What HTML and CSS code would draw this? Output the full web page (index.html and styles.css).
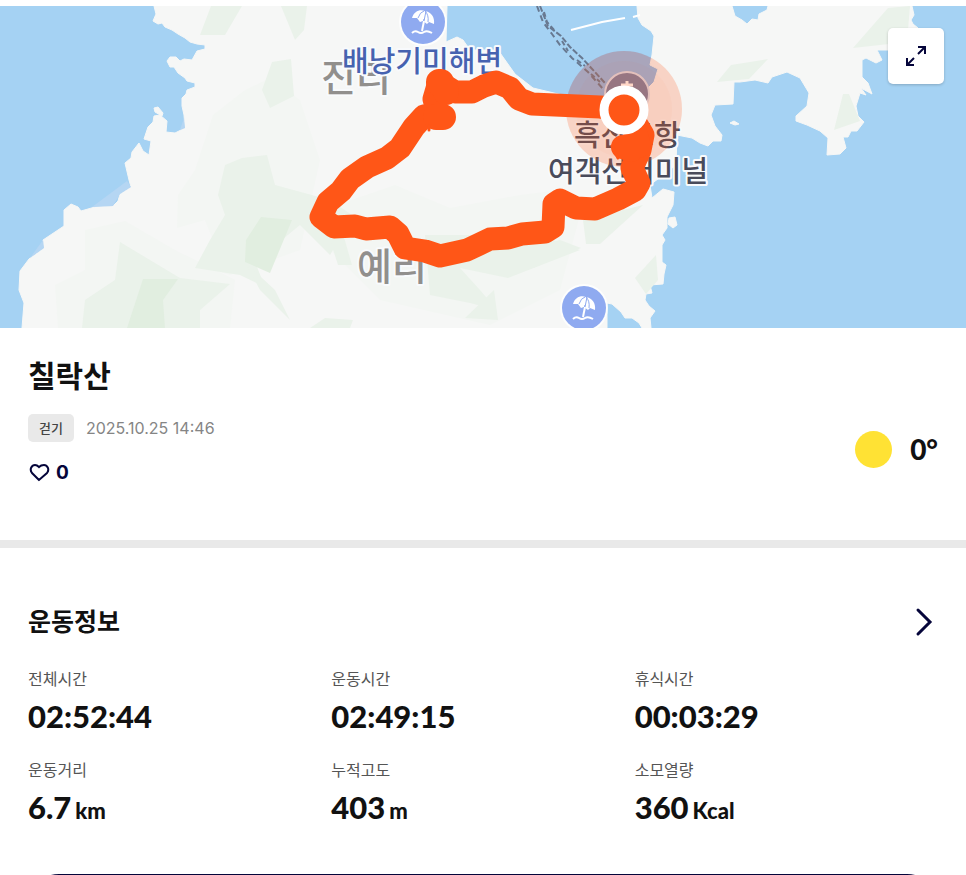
FILE: index.html
```html
<!DOCTYPE html>
<html lang="ko">
<head>
  <meta charset="UTF-8"/>
  <meta name="viewport" content="width=device-width, initial-scale=1.0"/>
  <title>칠락산</title>
  <link rel="stylesheet" href="styles.css">
</head>
<body>
  <div class="page">
    <div class="map">
      <svg class="map-canvas" viewBox="0 6 966 322" preserveAspectRatio="xMidYMid slice">
        <defs>
          <g id="beach">
            <circle r="24" fill="#fff" opacity=".8"/>
            <circle r="22" fill="#8faaf0"/>
            <path d="M-11 -4C-9 -11 -3 -13 2 -11C8 -10 12 -5 11 2L6 0L4 2L0 -1L-3 0L-6 -4Z" fill="#fff"/>
            <path d="M1 -12L3 -11L-1 9L-3 9L1 -3M-5 -4Q-3 -10 1 -11M5 0Q6 -7 2 -11" fill="none" stroke="#8faaf0"/>
            <path d="M1 -1L-1 9" stroke="#fff" stroke-width="2"/>
            <path d="M-11 11Q-8 8 -5 10T1 10T9 11" fill="none" stroke="#fff" stroke-width="2"/>
          </g>
        </defs>
        <rect y="6" width="966" height="322" fill="#a5d2f3"/>
        <circle cx="624" cy="109" r="58" fill="#6f96dc" opacity=".36"/>

        <!-- island -->
        <path class="land" d="M154 6L156 14L153 21L158 24L162 23L165 27L172 30L178 34L185 38L190 42L197 44L205 45L205 49L197 51L192 60L184 59L180 61L176 57L170 57L167 61L170 67L174 67L178 73L185 78L187 81L195 83L195 87L187 90L186 94L182 98L182 106L184 115L185 128L175 133L166 132L167 121L160 115L154 116L153 122L148 127L144 139L151 141L149 155L143 151L139 143L132 152L131 158L125 163L129 180L131 187L120 194L118 201L113 206L95 207L81 211L78 207L71 204L64 210L64 226L43 240L44 248L29 259L20 271L19 290L24 303L22 328L607 328L607 303L612 304L621 312L625 318L632 318L639 323L642 328L651 328L650 318L655 311L649 306L645 300L646 294L652 293L650 285L663 284L664 274L666 265L662 262L662 245L665 240L662 235L667 228L667 217L673 205L674 192L663 189L652 198L650 185L676 165L677 135L692 138L700 143L708 146L713 141L721 141L722 135L715 126L711 115L715 105L733 104L734 82L740 82L755 80L768 83L772 77L787 72L800 78L809 93L807 106L796 116L796 121L807 125L820 131L828 138L827 155L840 154L846 148L843 137L848 137L851 131L857 131L864 122L858 116L856 106L860 93L866 95L861 88L872 94L868 83L862 77L862 60L866 58L876 63L882 60L877 50L888 50L894 50L918 28L913 24L911 20L914 15L912 6L768 6L767 10L759 14L758 20L752 19L747 24L742 20L735 16L732 6L637 6L638 18L642 25L651 31L654 36L652 55L650 65L658 69L654 82L630 106L575 98L533 88L515 74L498 50L470 50L463 40L457 37L446 42L447 6Z"/>
        <path class="land" d="M154 108L158 107L163 113L162 116L155 112ZM669 218L675 217L677 225L673 228L668 224ZM730 123L734 121L739 124L735 125Z"/>
        <path class="shoal" d="M92 207L127 181L131 187L120 194L113 206ZM30 258L43 240L44 248ZM180 130L184 118L185 128Z"/>

        <!-- woodland -->
        <g class="wood-pale">
          <path d="M213 115L245 90L270 78L300 100L320 160L300 250L230 275L195 265L215 245L205 220L177 228L178 195L195 170Z"/>
          <path d="M85 230L125 221L175 250L235 280L230 328L58 328L55 285L85 270Z"/>
          <path d="M340 204L395 185L450 208L520 195L560 190L580 215L560 290L490 325L380 300L320 240Z"/>
        </g>
        <g class="wood">
          <path d="M242 158L267 155L275 185L330 200L352 215L345 230L330 255L300 225L255 262L265 287L240 275L195 268L210 240L225 215L218 195L225 165Z"/>
          <path d="M120 242L180 278L230 284L200 310L200 328L82 328L85 300L115 280Z"/>
          <path d="M211 6H242L225 35H200ZM281 6H307L304 30L295 40ZM272 62L291 59L294 96L270 108L262 90Z"/>
          <path d="M245 262L275 290L290 320L260 290ZM329 237H344L352 265H338Z"/>
          <path d="M425 235L540 235L580 250L508 278L460 268L480 290L497 310L470 303L430 295ZM465 318L494 290L498 320ZM310 328L325 318L353 320L350 328Z"/>
          <path d="M583 220L643 205L600 244L586 244ZM530 248L560 240L581 248L530 269ZM635 278L656 255L658 280L646 294Z"/>
          <path d="M717 82L731 65L768 59L749 79ZM853 48L888 8L910 6L907 42ZM834 130L843 94L849 94L860 121Z"/>
        </g>
        <g class="wood-deep">
          <path d="M261 217L292 220L270 273L245 262L246 240Z"/>
          <path d="M143 279H178L163 300L165 328L127 328Z"/>
        </g>

        <!-- ferry lane and breakwater -->
        <path d="M540 6L548 26L561 36L570 47L582 58L605 83" fill="none" stroke="#687991" stroke-width="2" stroke-dasharray="6 2"/>
        <path d="M537 6L543 22L552 34L560 45L572 58L588 72L604 90" fill="none" stroke="#687991" stroke-width="2" stroke-dasharray="6 4"/>
        <path d="M544 12L547 22L556 32M562 41L568 51M577 60L585 66M591 74L600 82" fill="none" stroke="#687991" stroke-width="2" stroke-dasharray="5 3"/>
        <path d="M571 30L602 22L625 18M633 17L640 15" fill="none" stroke="#fff" stroke-width="2"/>

        <!-- labels -->
        <text class="place place-town" x="321" y="91">진리</text>
        <text class="place place-town" x="357" y="280">예리</text>
        <use href="#beach" x="423" y="22"/>
        <use href="#beach" x="584" y="308"/>
        <text class="place place-beach" x="342" y="72">배낭기미해변</text>
        <circle cx="627" cy="94" r="22" fill="#7780a6" stroke="#dce3f1" stroke-width="2"/>
        <path d="M627 81V92M621 85H633" stroke="#fff" stroke-width="3"/>
        <text class="place place-port" x="574" y="146">흑산도항</text>
        <text class="place place-port" x="548" y="182">여객선터미널</text>
        <circle cx="624" cy="109" r="58" fill="#ff5617" opacity=".22"/>
        <circle cx="624" cy="109" r="48" fill="#ff5617" opacity=".03"/>

        <!-- track -->
        <g class="track">
          <path d="M623 110L600 107L532 104L519 99L510 88L496 82L484 86L472 92L455 92L439 82L434 99L438 114L424 116L414 127L400 148L387 158L367 167L350 179L341 191L328 202L321 217L334 227L355 226L366 229L390 227L398 234L405 248L425 251L440 256L467 250L490 239L508 238L522 234L545 232L553 227L554 204L560 200L576 208L595 209L618 199L635 190L639 183L632 168L640 150L643 135L634 120"/>
          <path d="M439 83V82M441 82L446 92M436 117H443" stroke-width="26"/>
          <path d="M623 147L631 150M635 132L639 146" stroke-width="24"/>
          <path d="M612 146L618 158M429 126V130" stroke-width="3"/>
        </g>
        <circle cx="624" cy="110" r="20" fill="#ff5617" stroke="#fff" stroke-width="9"/>
      </svg>
      <button class="expand" type="button">
        <svg width="24" height="24" viewBox="0 0 24 24"><path d="M14 10L20 4M14 3H21V10M10 14L4 20M3 14V21H10"/></svg>
      </button>
    </div>

    <section class="summary">
      <div>
        <h1>칠락산</h1>
        <div class="meta">
          <span class="badge">걷기</span>
          <time datetime="2025-10-25T14:46">2025.10.25 14:46</time>
        </div>
        <button class="like" type="button">
          <svg width="22" height="20" viewBox="0 0 22 20"><path d="M11 18L4 11C1 7 4 3 7 3C9 3 10 4 11 5C12 4 14 3 16 3C19 3 22 7 19 11Z"/></svg>
          <span>0</span>
        </button>
      </div>
      <div class="weather">
        <span class="sun"></span>
        <span>0°</span>
      </div>
    </section>

    <section class="workout">
      <div class="workout-head">
        <h2>운동정보</h2>
        <button class="more" type="button">
          <svg width="20" height="30" viewBox="0 0 20 30"><path d="M4 3L16 15L4 27"/></svg>
        </button>
      </div>
      <dl class="stats">
        <div><dt>전체시간</dt><dd>02:52:44</dd></div>
        <div><dt>운동시간</dt><dd>02:49:15</dd></div>
        <div><dt>휴식시간</dt><dd>00:03:29</dd></div>
        <div><dt>운동거리</dt><dd>6.7<small>km</small></dd></div>
        <div><dt>누적고도</dt><dd>403<small>m</small></dd></div>
        <div><dt>소모열량</dt><dd>360<small>Kcal</small></dd></div>
      </dl>
      <button class="detail" type="button"></button>
    </section>
  </div>
</body>
</html>
```

FILE: styles.css
```css
* { box-sizing: border-box; }
body { margin: 0; background: #fff; color: #111; font-family: Inter, "Noto Sans CJK KR", sans-serif; }
h1, h2, dl, dd { margin: 0; }
button { padding: 0; border: none; background: none; color: inherit; font: inherit; cursor: pointer; }
svg { display: block; }

.page { height: 100vh; padding-top: 6px; overflow: hidden; }

/* map */
.map { position: relative; }
.map-canvas { width: 100%; height: 322px; }
.land { fill: #f6f7f6; stroke: #f6f7f6; stroke-linejoin: round; }
.shoal { fill: #b5d6f3; }
.wood-pale { fill: #f3f6f3; }
.wood { fill: #eaf2ea; }
.wood-deep { fill: #e1eee0; }
.place { font-family: "Noto Sans CJK KR", sans-serif; font-weight: 500; paint-order: stroke; stroke: #f8fafc; stroke-width: 4px; stroke-linejoin: round; }
.place-town { font-size: 38px; fill: #918f8d; }
.place-beach { font-size: 29px; fill: #4662b0; }
.place-port { font-size: 29px; fill: #494b5b; }
.track { fill: none; stroke: #ff5617; stroke-width: 23px; stroke-linecap: round; stroke-linejoin: round; }
.expand { position: absolute; top: 22px; right: 22px; display: flex; align-items: center; justify-content: center; width: 56px; height: 56px; border-radius: 5px; background: #fff; box-shadow: 0 1px 3px rgba(0,0,0,0.2); }
.expand svg { fill: none; stroke: #05053a; stroke-width: 2px; }

/* title */
.summary { display: flex; justify-content: space-between; align-items: center; padding: 26px 28px 54px; border-bottom: 8px solid #e9e9e9; }
h1 { font-size: 30px; line-height: 44px; }
.meta { display: flex; align-items: center; gap: 12px; margin-top: 16px; }
.badge { padding: 0 11px; border-radius: 5px; background: #e9e9e9; color: #444; font-size: 13px; font-weight: 500; line-height: 28px; }
.meta time { color: #858585; font-size: 16px; }
.like { display: flex; align-items: center; gap: 6px; height: 28px; margin-top: 16px; color: #05053a; font-size: 19px; font-weight: 700; }
.like svg { fill: none; stroke: #05053a; stroke-width: 2px; }
.weather { display: flex; align-items: center; gap: 18px; margin-top: 58px; font-family: Lato, sans-serif; font-size: 28px; font-weight: 900; line-height: 36px; }
.sun { width: 37px; height: 37px; border-radius: 50%; background: #ffe234; }

/* workout */
.workout { padding: 52px 28px 0; }
.workout-head { display: flex; justify-content: space-between; align-items: center; }
h2 { font-size: 25px; line-height: 44px; }
.more { margin-right: 4px; }
.more svg { fill: none; stroke: #05053a; stroke-width: 3px; stroke-linecap: round; }
.stats { display: grid; grid-template-columns: repeat(3, 1fr); row-gap: 24px; margin-top: 23px; }
dt { color: #555; font-size: 16px; line-height: 24px; }
dd { height: 36px; margin-top: 7px; font-family: Lato, sans-serif; font-size: 31px; font-weight: 900; line-height: 36px; }
dd small { margin-left: 4px; font-size: 22px; }
.detail { display: block; width: 100%; height: 62px; margin-top: 49px; border: 2px solid #05053a; border-radius: 31px; }
```
